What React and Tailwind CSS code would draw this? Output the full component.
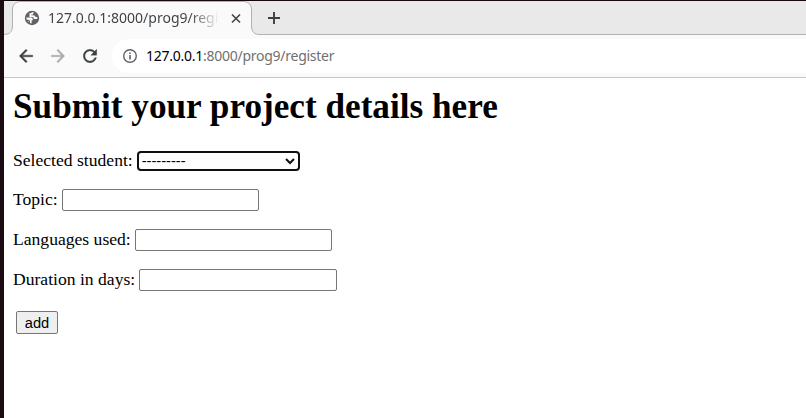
import React from 'react';

function GlobeIcon() {
  return (
    <svg className="size-[18px] shrink-0" viewBox="0 0 18 18">
      <circle cx="9" cy="9" r="7.200" fill="#5f6368" />
      <path d="M9.800 3.200C9.800 4.800 8.800 4.900 7.400 5.100V7.300H10.300C11.300 7.300 11.600 8 11.600 9H14.300" fill="none" stroke="#fafafa" strokeWidth="1.900" />
      <path d="M3.200 8.600H7.200C9.200 8.600 9.900 9.800 9.900 11.200H8.600V14.400C5.600 14.200 3.600 12 3.200 8.600Z" fill="#fafafa" />
      <path d="M4 11.200L6.300 12V14.300" fill="none" stroke="#5f6368" strokeWidth="1.300" />
    </svg>
  );
}

function TabStrip() {
  return (
    <div className="relative h-[34px] shrink-0 bg-[#e9e9e9]">
      <svg className="absolute left-0 top-0" width="802" height="34" viewBox="4 1 802 34" fill="none">
        <path d="M4 35V34.5C9 34.5 12.5 32 12.5 26V10C12.5 4.500 15.500 1.500 21 1.500H243C248.500 1.500 251.500 4.500 251.500 10V26C251.500 32 254.500 34.500 260 34.500V35Z" fill="#fafafa" />
        <path d="M4 34.500C9 34.500 12.500 32 12.500 26V10C12.500 4.500 15.500 1.500 21 1.500H243C248.500 1.500 251.500 4.500 251.500 10V26C251.500 32 254.500 34.500 260 34.500H806" stroke="#b2b2b2" />
      </svg>
      <div className="relative flex h-[34px] items-center pl-[19px]">
        <GlobeIcon />
        <span className="ml-[7px] w-[173px] overflow-hidden whitespace-nowrap bg-gradient-to-r from-[#3c4043] from-82% to-transparent to-99% bg-clip-text font-['Noto_Sans',sans-serif] text-[14px] leading-[20px] text-transparent">
          127.0.0.1:8000/prog9/register
        </span>
        <svg className="ml-[9px] size-[12px] shrink-0" viewBox="0 0 12 12" stroke="#46484a" strokeWidth="1.7">
          <path d="M2 2.500L10 10.500M10 2.500L2 10.500" />
        </svg>
        <svg className="ml-[25px] size-[14px] shrink-0" viewBox="0 0 14 14" stroke="#3c4043" strokeWidth="1.9">
          <path d="M7 1V13M1 7H13" />
        </svg>
      </div>
    </div>
  );
}

function Toolbar() {
  return (
    <div className="flex h-[43px] shrink-0 items-center border-b border-[#c6c6c6] bg-[#fafafa] pl-[12px]">
      <svg className="size-5 shrink-0" viewBox="0 0 24 24" fill="#3c3f41">
        <path d="M20 11H7.830l5.590-5.590L12 4l-8 8 8 8 1.410-1.410L7.830 13H20v-2z" stroke="#3c3f41" strokeWidth=".5" />
      </svg>
      <svg className="ml-3 size-5 shrink-0" viewBox="0 0 24 24" fill="#a9a9a9">
        <path d="M12 4l-1.410 1.410L16.170 11H4v2h12.170l-5.580 5.590L12 20l8-8z" stroke="#a9a9a9" strokeWidth=".4" />
      </svg>
      <svg className="ml-3 size-5 shrink-0" viewBox="0 0 24 24" fill="#3c3f41">
        <path d="M17.650 6.350C16.200 4.900 14.210 4 12 4c-4.420 0-7.990 3.580-7.990 8s3.570 8 7.990 8c3.730 0 6.840-2.550 7.730-6h-2.080c-.82 2.330-3.040 4-5.650 4-3.310 0-6-2.690-6-6s2.690-6 6-6c1.660 0 3.140.69 4.220 1.780L13 11h7V4l-2.350 2.350z" stroke="#3c3f41" strokeWidth=".4" />
      </svg>
      <div className="ml-3 flex h-[34px] flex-1 items-center rounded-l-full bg-white pl-[10px]">
        <svg className="size-4 shrink-0" viewBox="0 0 16 16" fill="none">
          <circle cx="8" cy="8" r="6.300" stroke="#5f6368" strokeWidth="1.400" />
          <path d="M8 7V11.500M8 4.500V6" stroke="#5f6368" strokeWidth="1.600" />
        </svg>
        <span className="ml-[8px] whitespace-nowrap font-['Noto_Sans',sans-serif] text-[14px] leading-5 tracking-[-0.26px] text-[#707070]">
          <span className="text-black">127.0.0.1</span>:8000/prog9/register
        </span>
      </div>
    </div>
  );
}

function Field({ label }) {
  return (
    <label className="flex h-[22px] items-center">
      <span className="-mt-[2px] whitespace-nowrap">{label}</span>
      <input className="ml-[4px] h-[22px] w-[197.500px] rounded-[2px] border border-[#767676] bg-white outline-none" />
    </label>
  );
}

export default function App() {
  return (
    <div className="flex h-[418px] w-[806px] flex-col overflow-hidden border-l-4 border-t border-l-[#1b0c14] border-t-[#15090f] bg-white text-black">
      <TabStrip />
      <Toolbar />
      <main className="flex flex-col pl-[9px] font-['Liberation_Serif',serif] text-[17.600px] leading-5">
        <h1 className="mt-[9px] h-10 whitespace-nowrap text-[35.200px] font-bold leading-10">Submit your project details here</h1>
        <div className="mt-[24px] flex h-5 items-center">
          <span className="-mt-[2px]">Selected student:</span>
          <div className="ml-[4px] flex h-5 w-[163px] items-center justify-between rounded-[4px] border-2 border-[#101010] pl-[3px] pr-[3px] font-['Liberation_Sans',sans-serif] text-[14.670px]">
            <span>---------</span>
            <svg className="size-[10px]" viewBox="0 0 10 10" fill="none" stroke="#101010" strokeWidth="2">
              <path d="M1 3L5 7L9 3" />
            </svg>
          </div>
        </div>
        <div className="mt-[18px] flex flex-col gap-[18px]">
          <Field label="Topic:" />
          <Field label="Languages used:" />
          <Field label="Duration in days:" />
        </div>
        <button className="ml-[3px] mt-[20px] h-[23px] w-[42px] rounded-[2px] border border-[#767676] bg-[#efefef] font-['Liberation_Sans',sans-serif] text-[14.670px] leading-5">add</button>
      </main>
    </div>
  );
}
